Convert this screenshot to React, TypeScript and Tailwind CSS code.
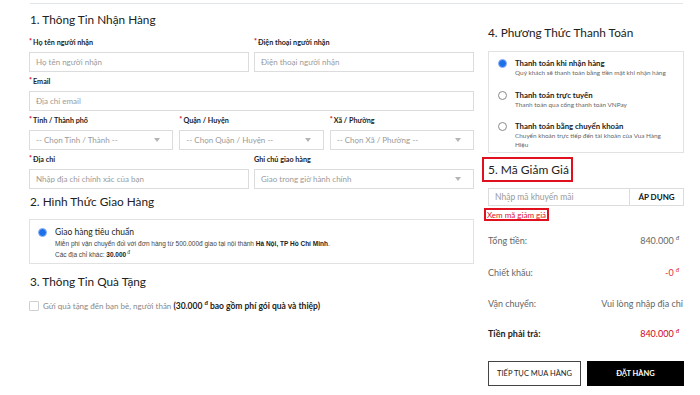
import React from "react";

const F = { fontFamily: "Lato, 'Noto Sans', sans-serif" };

function Label({ text, req = true }: { text: string; req?: boolean }) {
  return (
    <div className="h-[10px] leading-[10px] text-[7.2px] font-bold text-[#222] mb-[4px] whitespace-nowrap">
      {req && <span className="text-[#d0021b] relative -top-[1px] mr-[1px]">*</span>}
      {text}
    </div>
  );
}

function Input({ ph }: { ph: string }) {
  return (
    <div className="h-[20px] border border-[#dcdcdc] flex items-center px-[6px] text-[8px] text-[#9a9a9a] whitespace-nowrap overflow-hidden">
      {ph}
    </div>
  );
}

function Select({ ph }: { ph: string }) {
  return (
    <div className="h-[20px] border border-[#dcdcdc] flex items-center justify-between pl-[6px] pr-[12px] text-[8px] text-[#9a9a9a] whitespace-nowrap overflow-hidden">
      <span>{ph}</span>
      <svg width="6" height="4" viewBox="0 0 6 4">
        <path d="M0 0 L6 0 L3 4 Z" fill="#b5b5b5" />
      </svg>
    </div>
  );
}

function Sup({ className = "" }: { className?: string }) {
  return <span className={"text-[6px] relative -top-[4px] ml-[2px] " + className}>đ</span>;
}

function Radio({ checked }: { checked?: boolean }) {
  return checked ? (
    <span className="block w-[9px] h-[9px] rounded-full border border-[#8fb4f5] bg-[#1f6fe8] shrink-0" />
  ) : (
    <span className="block w-[9px] h-[9px] rounded-full border border-[#8a8a8a] bg-white shrink-0" />
  );
}

const H = "h-[18px] leading-[18px] text-[11.8px] text-[#222] whitespace-nowrap";

export default function App() {
  return (
    <div className="w-[700px] h-[395px] bg-white overflow-hidden text-[#333]" style={F}>
      <div className="ml-[30px] mr-[17px] mt-[3px] border-t border-[#e3e6e8]" />
      <div className="flex pl-[29px]">
        {/* LEFT */}
        <div className="w-[445px]">
          <div className={"mt-[7px] pl-[1px] " + H}>1. Thông Tin Nhận Hàng</div>
          <div className="mt-[9px] grid grid-cols-2 gap-x-[5px]">
            <div>
              <Label text="Họ tên người nhận" />
              <Input ph="Họ tên người nhận" />
            </div>
            <div>
              <Label text="Điện thoại người nhận" />
              <Input ph="Điện thoại người nhận" />
            </div>
          </div>
          <div className="mt-[5px]">
            <Label text="Email" />
            <Input ph="Địa chỉ email" />
          </div>
          <div className="mt-[5px] grid grid-cols-3 gap-x-[6px]">
            <div>
              <Label text="Tỉnh / Thành phố" />
              <Select ph="-- Chọn Tỉnh / Thành --" />
            </div>
            <div>
              <Label text="Quận / Huyện" />
              <Select ph="-- Chọn Quận / Huyện --" />
            </div>
            <div>
              <Label text="Xã / Phường" />
              <Select ph="-- Chọn Xã / Phường --" />
            </div>
          </div>
          <div className="mt-[5px] grid grid-cols-2 gap-x-[5px]">
            <div>
              <Label text="Địa chỉ" />
              <Input ph="Nhập địa chỉ chính xác của bạn" />
            </div>
            <div>
              <Label text="Ghi chú giao hàng" req={false} />
              <Select ph="Giao trong giờ hành chính" />
            </div>
          </div>

          <div className={"mt-[4px] pl-[1px] " + H}>2. Hình Thức Giao Hàng</div>
          <div className="mt-[8px] h-[45px] border border-[#e2e2e2] flex pl-[8px] pt-[7px]">
            <div className="pt-[1px]">
              <Radio checked />
            </div>
            <div className="ml-[8px]">
              <div className="h-[11px] leading-[11px] text-[8.5px] text-[#222]">Giao hàng tiêu chuẩn</div>
              <div className="h-[11px] leading-[11px] text-[6.5px] text-[#444]" style={{ fontFamily: "'Liberation Sans', Arial, sans-serif" }}>
                Miễn phí vận chuyển đối với đơn hàng từ 500.000đ giao tại nội thành <b className="text-[#222]">Hà Nội, TP Hồ Chí Minh</b>.
              </div>
              <div className="h-[11px] leading-[11px] text-[6.5px] text-[#444]" style={{ fontFamily: "'Liberation Sans', Arial, sans-serif" }}>
                Các địa chỉ khác: <b className="text-[#222]">30.000</b>
                <span className="text-[5px] relative -top-[3px] ml-[1px]">đ</span>
              </div>
            </div>
          </div>

          <div className={"mt-[9px] pl-[1px] " + H}>3. Thông Tin Quà Tặng</div>
          <div className="mt-[9px] flex items-center">
            <span className="block w-[10px] h-[10px] border border-[#d0d0d0] rounded-[1px] shrink-0" />
            <span className="ml-[4px] text-[8px] text-[#888] whitespace-nowrap">
              Gửi quà tặng đến bạn bè, người thân{" "}
              <span className="text-[#222] font-bold text-[8.5px]">
                (30.000 <span className="text-[6px] relative -top-[4px]">đ</span> bao gồm phí gói quà và thiệp)
              </span>
            </span>
          </div>
        </div>

        {/* RIGHT */}
        <div className="w-[196px] ml-[14px]">
          <div className={"mt-[20px] " + H}>4. Phương Thức Thanh Toán</div>
          <div className="mt-[9px] h-[102px] border border-[#e2e2e2] pl-[9px] pt-[6px]">
            {[
              ["Thanh toán khi nhận hàng", ["Quý khách sẽ thanh toán bằng tiền mặt khi nhận hàng"], true],
              ["Thanh toán trực tuyến", ["Thanh toán qua cổng thanh toán VNPay"], false],
              ["Thanh toán bằng chuyển khoản", ["Chuyển khoản trực tiếp đến tài khoản của Vua Hàng", "Hiệu"], false],
            ].map(([t, subs, c], i) => (
              <div key={i} className={"flex " + (i > 0 ? "mt-[12px]" : "")}>
                <div className="pt-[1px]">
                  <Radio checked={c as boolean} />
                </div>
                <div className="ml-[8px]">
                  <div className="h-[11px] leading-[11px] text-[7.8px] font-bold text-[#222] whitespace-nowrap">{t as string}</div>
                  {(subs as string[]).map((s, j) => (
                    <div key={j} className="h-[8.5px] leading-[8.5px] text-[6.4px] text-[#666] whitespace-nowrap">
                      {s}
                    </div>
                  ))}
                </div>
              </div>
            ))}
          </div>

          <div className="mt-[4px] -ml-[6px] w-[91px] h-[25px] border-2 border-[#e0101e] flex items-center pl-[4px] text-[12px] text-[#222] whitespace-nowrap">
            5. Mã Giảm Giá
          </div>
          <div className="mt-[6px] h-[18px] border border-[#dcdcdc] flex">
            <div className="flex-1 flex items-center pl-[6px] text-[8.5px] text-[#9a9a9a]">Nhập mã khuyến mãi</div>
            <div className="w-[54px] border-l border-[#dcdcdc] flex items-center justify-center text-[8px] font-bold text-[#111]">ÁP DỤNG</div>
          </div>
          <div className="mt-[2px] -ml-[4px] w-[65px] h-[13px] border-2 border-[#e0101e] flex items-center pl-[1px] text-[8px] text-[#e0101e] whitespace-nowrap">
            Xem mã giảm giá
          </div>

          <div className="mt-[13px] h-[14px] flex items-center justify-between text-[9px] text-[#666] pr-[5px]">
            <span>Tổng tiền:</span>
            <span>840.000<Sup /></span>
          </div>
          <div className="mt-[18px] h-[14px] flex items-center justify-between text-[9px] text-[#666] pr-[5px]">
            <span>Chiết khấu:</span>
            <span className="text-[#e0303a]">-0<Sup /></span>
          </div>
          <div className="mt-[17px] h-[14px] flex items-center justify-between text-[9px] text-[#666] pr-[1px]">
            <span>Vận chuyển:</span>
            <span>Vui lòng nhập địa chỉ</span>
          </div>
          <div className="mt-[16px] h-[14px] flex items-center justify-between text-[9px] pr-[5px]">
            <span className="font-bold text-[#222]">Tiền phải trả:</span>
            <span className="text-[#d0021b]">840.000<Sup /></span>
          </div>

          <div className="mt-[20px] flex gap-[6px]">
            <div className="w-[93px] h-[25px] border border-[#444] flex items-center justify-center text-[7.5px] text-[#222] whitespace-nowrap">
              TIẾP TỤC MUA HÀNG
            </div>
            <div className="w-[97px] h-[25px] bg-black flex items-center justify-center text-[7.5px] text-white font-bold whitespace-nowrap">
              ĐẶT HÀNG
            </div>
          </div>
        </div>
      </div>
    </div>
  );
}
